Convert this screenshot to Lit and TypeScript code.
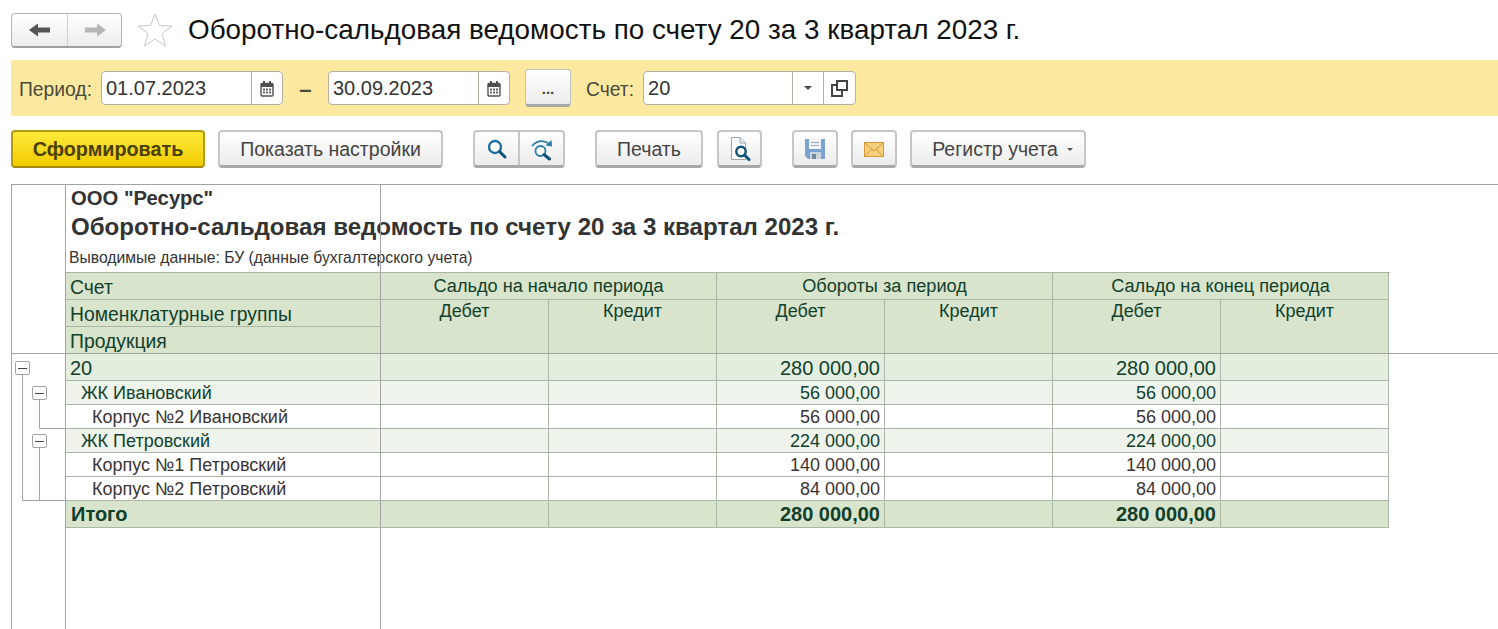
import { css, html, LitElement, svg } from "lit";
import { customElement } from "lit/decorators.js";

const calendar = html`<svg width="14" height="17" viewBox="0 0 14 17">
  <rect x="1" y="3.5" width="12" height="12.5" rx="1" fill="#fff" stroke="#505050" stroke-width="1.4" />
  <rect x="1" y="3" width="12" height="4" fill="#505050" />
  <rect x="3" y="1" width="2" height="3" fill="#505050" />
  <rect x="9" y="1" width="2" height="3" fill="#505050" />
  ${[3, 6, 9].flatMap((x) => [8.5, 11.5].map((y) => svg`<rect x=${x} y=${y} width="2" height="2" fill="#666" />`))}
</svg>`;

const rows = [
  { name: "20", kind: "top", debit: "280 000,00", end: "280 000,00" },
  { name: "ЖК Ивановский", kind: "group", debit: "56 000,00", end: "56 000,00" },
  { name: "Корпус №2 Ивановский", kind: "leaf", debit: "56 000,00", end: "56 000,00" },
  { name: "ЖК Петровский", kind: "group", debit: "224 000,00", end: "224 000,00" },
  { name: "Корпус №1 Петровский", kind: "leaf", debit: "140 000,00", end: "140 000,00" },
  { name: "Корпус №2 Петровский", kind: "leaf", debit: "84 000,00", end: "84 000,00" },
  { name: "Итого", kind: "total", debit: "280 000,00", end: "280 000,00" },
];

@customElement("app-root")
export class AppRoot extends LitElement {
  static styles = css`
    :host {
      display: block;
      height: 629px;
      overflow: hidden;
      background: #fff;
      font-family: "Liberation Sans", Arial, sans-serif;
      color: #333;
    }
    .head {
      display: flex;
      align-items: center;
      height: 36px;
      padding: 12px 0 0 11px;
    }
    .nav {
      display: flex;
      width: 111px;
      height: 35px;
      box-sizing: border-box;
      border: 1px solid #b5b5b5;
      border-bottom: 2px solid #a0a0a0;
      border-radius: 4px;
      background: linear-gradient(#fff, #ececec);
    }
    .nav span {
      display: flex;
      align-items: center;
      justify-content: center;
    }
    .nav span:first-child {
      width: 55px;
    }
    .nav span + span {
      flex: 1;
      border-left: 1px solid #d0d0d0;
    }
    .star {
      margin: 0 15px;
      display: block;
    }
    h1 {
      margin: 0;
      font-size: 27.85px;
      font-weight: 400;
      color: #111;
      white-space: nowrap;
    }
    .filter {
      display: flex;
      align-items: center;
      height: 56px;
      margin: 12px 0 0 11px;
      padding-left: 8px;
      background: #fce89f;
      font-size: 19.3px;
      color: #4a4a3c;
    }
    .label {
      padding-top: 3px;
    }
    .field {
      display: flex;
      height: 34px;
      box-sizing: border-box;
      border: 1px solid #b5b0a0;
      border-radius: 4px;
      background: #fff;
      color: #333;
      font-size: 20px;
      line-height: 33px;
    }
    .field .val {
      padding-left: 4px;
    }
    .field .btn {
      display: flex;
      align-items: center;
      justify-content: center;
      border-left: 1px solid #b5b0a0;
    }
    .date {
      width: 182px;
      margin-left: 9px;
    }
    .date.next {
      margin-left: 0;
    }
    .date .val {
      width: 146px;
    }
    .date .btn {
      width: 30px;
    }
    .dash {
      width: 45px;
      padding-top: 3px;
      text-align: center;
      font-size: 22px;
      font-weight: 700;
    }
    .dots {
      display: flex;
      align-items: center;
      justify-content: center;
      box-sizing: border-box;
      width: 46px;
      height: 38px;
      margin: 0 15px;
      border: 1px solid #c0c0c0;
      border-bottom: 3px solid #a8a8a8;
      border-radius: 4px;
      background: linear-gradient(#fff, #ececec);
      font-weight: 700;
      font-size: 15px;
      color: #444;
      padding-top: 2px;
    }
    .acc {
      width: 213px;
      margin-left: 9px;
    }
    .acc .val {
      width: 145px;
    }
    .acc .btn {
      width: 31px;
    }
    .tools {
      display: flex;
      height: 38px;
      margin: 14px 0 16px 11px;
    }
    .b {
      display: flex;
      align-items: center;
      justify-content: center;
      box-sizing: border-box;
      height: 38px;
      padding-top: 1px;
      border: 2px solid #c6c6c6;
      border-bottom: 3px solid #a8a8a8;
      border-radius: 4px;
      background: linear-gradient(#fff, #ececec);
      font-size: 19.5px;
      color: #444;
      white-space: nowrap;
    }
    .b.main {
      width: 194px;
      background: linear-gradient(#ffe93a, #f1cb00);
      border: 2px solid #b59b10;
      border-bottom: 2px solid #a28a10;
      font-weight: 700;
      font-size: 19.8px;
      color: #4a4000;
    }
    .b.settings {
      width: 225px;
      margin-left: 13px;
    }
    .b.split {
      width: 92px;
      margin-left: 30px;
      padding: 0;
    }
    .b.split span {
      display: flex;
      align-items: center;
      justify-content: center;
      height: 100%;
      flex: 1;
    }
    .b.split span + span {
      border-left: 2px solid #c6c6c6;
    }
    .b.print {
      width: 108px;
      margin-left: 30px;
    }
    .b.icon {
      width: 46px;
      margin-left: 13px;
    }
    .b.icon.doc {
      width: 45px;
      margin-left: 14px;
    }
    .b.icon.wide-gap {
      margin-left: 30px;
    }
    .b.reg {
      width: 176px;
      margin-left: 13px;
      padding-left: 9px;
    }
    .caret {
      width: 0;
      height: 0;
      margin-left: 9px;
      border: 3px solid transparent;
      border-top: 3px solid #555;
      border-bottom: 0;
    }
    .btn .caret {
      margin: 0;
      border-width: 4px 4px 0;
      border-top-color: #444;
    }
    .sheet {
      position: relative;
      margin-left: 11px;
      height: 445px;
      border-top: 1px solid #a3a3a3;
    }
    .line {
      position: absolute;
      background: #a3a3a3;
    }
    .line.v {
      top: 0;
      width: 1px;
      height: 445px;
    }
    .line.h {
      left: 0;
      top: 168px;
      width: 1487px;
      height: 1px;
    }
    .notes {
      margin-left: 54px;
      height: 87px;
      padding-left: 6px;
      color: #333;
    }
    .org {
      font-size: 20.3px;
      font-weight: 700;
      line-height: 26px;
    }
    .big {
      font-size: 24.1px;
      font-weight: 700;
      line-height: 32px;
    }
    .out {
      margin: 6px 0 0 -2px;
      font-size: 15.7px;
      line-height: 18px;
      white-space: nowrap;
    }
    .grid {
      display: grid;
      width: 1324px;
      margin-left: 54px;
      grid-template-columns: 315px repeat(6, 168px);
      grid-template-rows: 27px 27px 27px 27px repeat(5, 24px) 27px;
      border-top: 1px solid #a8b5a0;
      border-left: 1px solid #a8b5a0;
      font-size: 18px;
      color: #123f2c;
    }
    .c {
      box-sizing: border-box;
      border-right: 1px solid #a9b8a6;
      border-bottom: 1px solid #a9b8a6;
      padding: 0 4px;
      white-space: nowrap;
      overflow: hidden;
    }
    .th {
      background: #d8e4cb;
      line-height: 26px;
    }
    .th.center {
      grid-column: span 2;
      text-align: center;
      font-size: 18.15px;
    }
    .th.sub {
      grid-row: 2 / span 2;
      text-align: center;
      line-height: 22px;
    }
    .th.name {
      grid-column: 1;
      font-size: 19.35px;
      line-height: 28px;
    }
    .th.r1 {
      grid-row: 1;
    }
    .th.r2 {
      grid-row: 2;
    }
    .th.r3 {
      grid-row: 3;
    }
    .top {
      background: #e3eedf;
      font-size: 20px;
      line-height: 28px;
    }
    .group {
      background: #eef4ec;
      line-height: 25px;
    }
    .leaf {
      background: #fff;
      color: #3b3333;
      line-height: 25px;
    }
    .total {
      background: #d8e4cb;
      font-weight: 700;
      font-size: 20px;
      line-height: 26px;
    }
    .total.name {
      padding-left: 5px;
    }
    .num {
      text-align: right;
    }
    .group.name {
      padding-left: 15px;
    }
    .leaf.name {
      padding-left: 26px;
    }
    .tree {
      position: absolute;
      left: 0;
      top: 0;
    }
  `;

  renderRow(r: (typeof rows)[number]) {
    return html`
      <div class="c ${r.kind} name">${r.name}</div>
      <div class="c ${r.kind}"></div>
      <div class="c ${r.kind}"></div>
      <div class="c ${r.kind} num">${r.debit}</div>
      <div class="c ${r.kind}"></div>
      <div class="c ${r.kind} num">${r.end}</div>
      <div class="c ${r.kind}"></div>
    `;
  }

  render() {
    return html`
      <div class="head">
        <div class="nav">
          <span>
            <svg width="22" height="14" viewBox="0 0 22 14"><path d="M0 7 L9 0.5 V4.5 H21 V9.5 H9 V13.5 Z" fill="#555" /></svg>
          </span>
          <span>
            <svg width="22" height="14" viewBox="0 0 22 14"><path d="M22 7 L13 0.5 V4.5 H1 V9.5 H13 V13.5 Z" fill="#b5b5b5" /></svg>
          </span>
        </div>
        <svg class="star" width="36" height="34" viewBox="0 0 36 34">
          <path d="M18 1 L22.5 12.5 L35 13 L25 20.5 L28.5 33 L18 26 L7.5 33 L11 20.5 L1 13 L13.5 12.5 Z" fill="#fff" stroke="#c8c8c8" />
        </svg>
        <h1>Оборотно-сальдовая ведомость по счету 20 за 3 квартал 2023 г.</h1>
      </div>

      <div class="filter">
        <span class="label">Период:</span>
        <div class="field date"><span class="val">01.07.2023</span><span class="btn">${calendar}</span></div>
        <span class="dash">–</span>
        <div class="field date next"><span class="val">30.09.2023</span><span class="btn">${calendar}</span></div>
        <div class="dots">...</div>
        <span class="label">Счет:</span>
        <div class="field acc">
          <span class="val">20</span>
          <span class="btn"><span class="caret"></span></span>
          <span class="btn">
            <svg width="17" height="17" viewBox="0 0 17 17" fill="none" stroke="#444" stroke-width="2"><path d="M6 1 H16 V10 H6 Z" /><path d="M6 5 H1 V16 H11 V10" /></svg>
          </span>
        </div>
      </div>

      <div class="tools">
        <div class="b main">Сформировать</div>
        <div class="b settings">Показать настройки</div>
        <div class="b split">
          <span>
            <svg width="22" height="22" viewBox="0 0 22 22">
              <circle cx="9" cy="9" r="6" fill="#fff" stroke="#1f6ea1" stroke-width="2.4" />
              <path d="M13.5 13.5 L19 19" stroke="#0f5278" stroke-width="3" stroke-linecap="round" />
            </svg>
          </span>
          <span>
            <svg width="24" height="24" viewBox="0 0 24 24">
              <circle cx="10.5" cy="14" r="5" fill="#fff" stroke="#2a7aa8" stroke-width="1.8" />
              <path d="M14 17.5 L19.5 22" stroke="#0f5278" stroke-width="3" stroke-linecap="round" />
              <path d="M2 9 Q9 1 18 6" fill="none" stroke="#2a7aa8" stroke-width="1.7" />
              <path d="M22 9.5 L15.5 8.5 L21.5 3 Z" fill="#2a7aa8" />
            </svg>
          </span>
        </div>
        <div class="b print">Печать</div>
        <div class="b icon doc">
          <svg width="22" height="26" viewBox="0 0 22 26">
            <path d="M2.5 1.5 H11 L16.5 7 V23.5 H2.5 Z" fill="#fff" stroke="#9aa5ad" />
            <path d="M11 1.5 V7 H16.5" fill="#e3e8ec" stroke="#9aa5ad" />
            <circle cx="12" cy="15.5" r="4.7" fill="#fff" stroke="#0f5278" stroke-width="2.4" />
            <path d="M15.5 19 L20 23.5" stroke="#0f5278" stroke-width="3" stroke-linecap="round" />
          </svg>
        </div>
        <div class="b icon wide-gap">
          <svg width="20" height="20" viewBox="0 0 20 20">
            <path d="M0 0 H20 V20 H3 L0 17 Z" fill="#7aa3d2" />
            <rect x="4" y="0" width="12" height="10" fill="#f2f5f9" />
            <path d="M6 3.5 H14 M6 6.5 H14" stroke="#9ab" />
            <rect x="5" y="13" width="11" height="7" fill="#ccd5dc" />
            <rect x="7" y="15" width="4" height="5" fill="#6e8aa0" />
          </svg>
        </div>
        <div class="b icon">
          <svg width="20" height="15" viewBox="0 0 20 15">
            <rect x="0.5" y="0.5" width="19" height="14" fill="#f6cf7e" stroke="#d79a3a" />
            <path d="M1 1 L10 9 L19 1 M1 14 L8 7 M19 14 L12 7" fill="none" stroke="#d79a3a" />
          </svg>
        </div>
        <div class="b reg">Регистр учета<span class="caret"></span></div>
      </div>

      <div class="sheet">
        <div class="notes">
          <div class="org">ООО "Ресурс"</div>
          <div class="big">Оборотно-сальдовая ведомость по счету 20 за 3 квартал 2023 г.</div>
          <div class="out">Выводимые данные: БУ (данные бухгалтерского учета)</div>
        </div>
        <div class="grid">
          <div class="c th name r1">Счет</div>
          <div class="c th center">Сальдо на начало периода</div>
          <div class="c th center">Обороты за период</div>
          <div class="c th center">Сальдо на конец периода</div>
          <div class="c th name r2">Номенклатурные группы</div>
          <div class="c th name r3">Продукция</div>
          ${["Дебет", "Кредит", "Дебет", "Кредит", "Дебет", "Кредит"].map((t) => html`<div class="c th sub">${t}</div>`)}
          ${rows.map((r) => this.renderRow(r))}
        </div>
        <div class="line v" style="left:0"></div>
        <div class="line v" style="left:54px"></div>
        <div class="line v" style="left:369px"></div>
        <div class="line h"></div>
        <svg class="tree" width="56" height="330">
          <g fill="none" stroke="#a3a3a3">
            <path d="M11.5 190 V315.5 H54" />
            <path d="M28.5 215 V243.5 H54" />
            <path d="M28.5 263 V315.5" />
          </g>
          ${[[4, 176], [21, 201], [21, 249]].map(
            ([x, y]) => svg`<rect x=${x + 0.5} y=${y + 0.5} width="14" height="13" rx="1.5" fill="#fff" stroke="#a3a3a3" />
              <path d=${`M${x + 3} ${y + 7.5} H${x + 12}`} stroke="#444" />`,
          )}
        </svg>
      </div>
    `;
  }
}
